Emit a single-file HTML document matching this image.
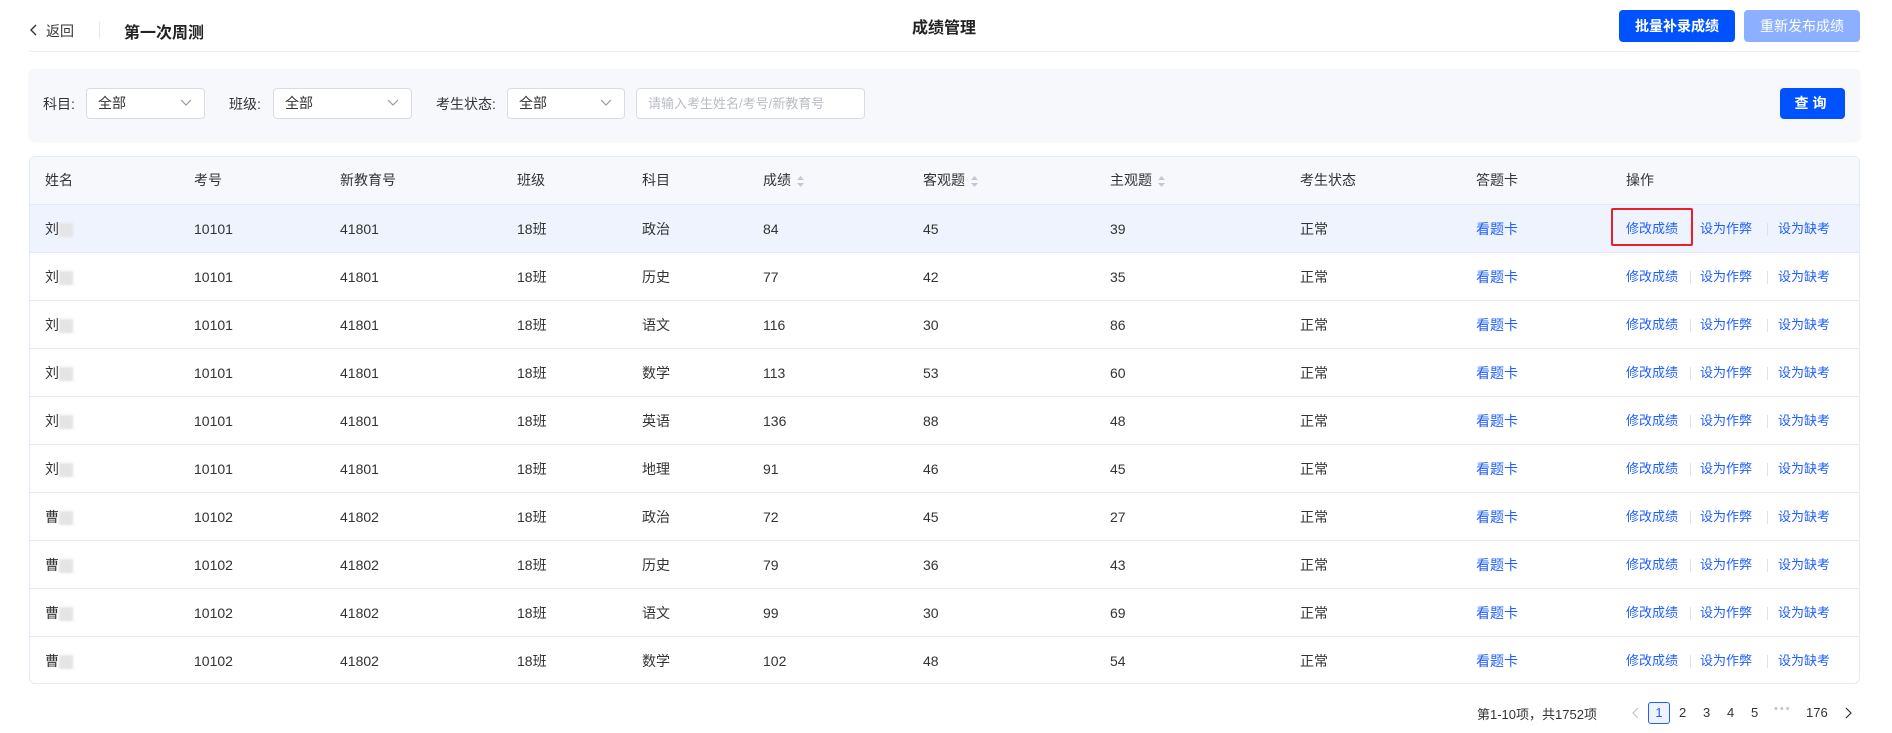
<!DOCTYPE html>
<html><head><meta charset="utf-8"><style>
*{margin:0;padding:0;box-sizing:border-box}
body{width:1892px;height:733px;background:#fff;font-family:"Liberation Sans","Noto Sans CJK SC",sans-serif;font-size:14px;color:#333;position:relative;overflow:hidden}
.a{position:absolute;white-space:nowrap}
.sel{position:absolute;height:31px;border:1px solid #d9dce3;border-radius:4px;background:#fff;padding-left:11px;line-height:29px;font-size:14px;color:#333}
.sel svg{position:absolute;right:12px;top:10px}
.btn{position:absolute;border-radius:4px;color:#fff;font-size:14px;font-weight:bold;text-align:center}
.row{position:absolute;left:29px;width:1831px;height:48px;border-top:1px solid #e3eaf7}
.row span{position:absolute;top:0;line-height:48px;font-size:14px;color:#333}
.row .l{color:#1f5fff}
.sep{position:absolute;top:18px;width:1px;height:13px;background:#dce3ef}
.sort{display:inline-block;vertical-align:middle;margin-left:6px}
</style></head><body>
<svg class="a" style="left:29px;top:23px" width="10" height="14"><path d="M7 2 L2 7 L7 12" fill="none" stroke="#333" stroke-width="1.4"/></svg>
<div class="a" style="left:46px;top:21px;font-size:14px;color:#333">返回</div>
<div class="a" style="left:99px;top:22px;width:1px;height:16px;background:#e3e6ec"></div>
<div class="a" style="left:124px;top:19px;font-size:16px;font-weight:bold;color:#222">第一次周测</div>
<div class="a" style="left:912px;top:14px;font-size:16px;font-weight:bold;color:#222">成绩管理</div>
<div class="btn" style="left:1619px;top:10px;width:116px;height:32px;line-height:32px;background:#0052ff">批量补录成绩</div>
<div class="btn" style="left:1744px;top:10px;width:116px;height:32px;line-height:32px;background:#8cb0ff;font-weight:normal">重新发布成绩</div>
<div class="a" style="left:29px;top:51px;width:1831px;height:1px;background:#eceff4"></div>

<div class="a" style="left:29px;top:69px;width:1831px;height:72px;background:#f7f8fb;border-radius:6px;box-shadow:0 1px 3px rgba(0,0,0,0.05)"></div>
<div class="a" style="left:43px;top:94px">科目:</div>
<div class="sel" style="left:86px;top:88px;width:119px">全部<svg width="12" height="8"><path d="M1 1 L6 6 L11 1" fill="none" stroke="#999" stroke-width="1.2"/></svg></div>
<div class="a" style="left:229px;top:94px">班级:</div>
<div class="sel" style="left:273px;top:88px;width:139px">全部<svg width="12" height="8"><path d="M1 1 L6 6 L11 1" fill="none" stroke="#999" stroke-width="1.2"/></svg></div>
<div class="a" style="left:436px;top:94px">考生状态:</div>
<div class="sel" style="left:507px;top:88px;width:118px">全部<svg width="12" height="8"><path d="M1 1 L6 6 L11 1" fill="none" stroke="#999" stroke-width="1.2"/></svg></div>
<div class="sel" style="left:636px;top:88px;width:229px;color:#b8bcc4;font-size:13px">请输入考生姓名/考号/新教育号</div>
<div class="btn" style="left:1780px;top:88px;width:65px;height:31px;line-height:31px;background:#0052ff;letter-spacing:4px">查询</div>

<div class="a" style="left:29px;top:156px;width:1831px;height:528px;border:1px solid #e3eaf7;border-radius:6px;overflow:hidden">
<div style="position:absolute;left:0;top:0;width:100%;height:48px;background:#f7f8fb"></div>
<div style="position:absolute;left:0;top:48px;width:100%;height:48px;background:#eef3fd"></div>
</div>
<div class="row" style="top:156px;border-top:none">
<span style="left:16px">姓名</span><span style="left:165px">考号</span><span style="left:311px">新教育号</span><span style="left:488px">班级</span><span style="left:613px">科目</span>
<span style="left:734px">成绩<svg class="sort" width="7" height="11"><path d="M3.5 0 L7 4 L0 4Z M0 7 L7 7 L3.5 11Z" fill="#c4c8d0"/></svg></span>
<span style="left:894px">客观题<svg class="sort" width="7" height="11"><path d="M3.5 0 L7 4 L0 4Z M0 7 L7 7 L3.5 11Z" fill="#c4c8d0"/></svg></span>
<span style="left:1081px">主观题<svg class="sort" width="7" height="11"><path d="M3.5 0 L7 4 L0 4Z M0 7 L7 7 L3.5 11Z" fill="#c4c8d0"/></svg></span>
<span style="left:1271px">考生状态</span><span style="left:1447px">答题卡</span><span style="left:1597px">操作</span>
</div>
<div id="rows"></div>
<div class="a" style="left:1611px;top:208px;width:82px;height:38px;border:2px solid #e8202a;border-radius:2px"></div>

<div class="a" style="left:1477px;top:704px;font-size:13px;color:#333">第1-10项，共1752项</div>
<svg class="a" style="left:1632px;top:707px" width="8" height="12"><path d="M6 1 L1 6 L6 11" fill="none" stroke="#c0c4cc" stroke-width="1.2"/></svg>
<div class="a" style="left:1648px;top:702px;width:22px;height:22px;border:1px solid #1f5fff;border-radius:3px;background:#eef3fd;color:#1f5fff;text-align:center;line-height:20px;font-size:13px">1</div>
<div class="a" style="left:1679px;top:705px;font-size:13px">2</div>
<div class="a" style="left:1703px;top:705px;font-size:13px">3</div>
<div class="a" style="left:1727px;top:705px;font-size:13px">4</div>
<div class="a" style="left:1751px;top:705px;font-size:13px">5</div>
<div class="a" style="left:1774px;top:703px;font-size:11px;color:#c0c4cc;letter-spacing:2px">•••</div>
<div class="a" style="left:1806px;top:705px;font-size:13px">176</div>
<svg class="a" style="left:1844px;top:707px" width="8" height="12"><path d="M2 1 L7 6 L2 11" fill="none" stroke="#333" stroke-width="1.2"/></svg>

<script>
var d=[["刘","10101","41801","政治",84,45,39],["刘","10101","41801","历史",77,42,35],["刘","10101","41801","语文",116,30,86],["刘","10101","41801","数学",113,53,60],["刘","10101","41801","英语",136,88,48],["刘","10101","41801","地理",91,46,45],["曹","10102","41802","政治",72,45,27],["曹","10102","41802","历史",79,36,43],["曹","10102","41802","语文",99,30,69],["曹","10102","41802","数学",102,48,54]];
var h="";
d.forEach(function(r,i){
h+='<div class="row" style="top:'+(204+i*48)+'px"><span style="left:16px">'+r[0]+'<i style="display:inline-block;width:14px;height:14px;background:#e4e4e6;vertical-align:middle;filter:blur(1px)"></i></span><span style="left:165px">'+r[1]+'</span><span style="left:311px">'+r[2]+'</span><span style="left:488px">18班</span><span style="left:613px">'+r[3]+'</span><span style="left:734px">'+r[4]+'</span><span style="left:894px">'+r[5]+'</span><span style="left:1081px">'+r[6]+'</span><span style="left:1271px">正常</span><span class="l" style="left:1447px">看题卡</span><span class="l" style="left:1597px;font-size:13px">修改成绩</span><i class="sep" style="left:1661px"></i><span class="l" style="left:1671px;font-size:13px">设为作弊</span><i class="sep" style="left:1738px"></i><span class="l" style="left:1749px;font-size:13px">设为缺考</span></div>';
});
document.getElementById("rows").outerHTML=h;
</script>
</body></html>
